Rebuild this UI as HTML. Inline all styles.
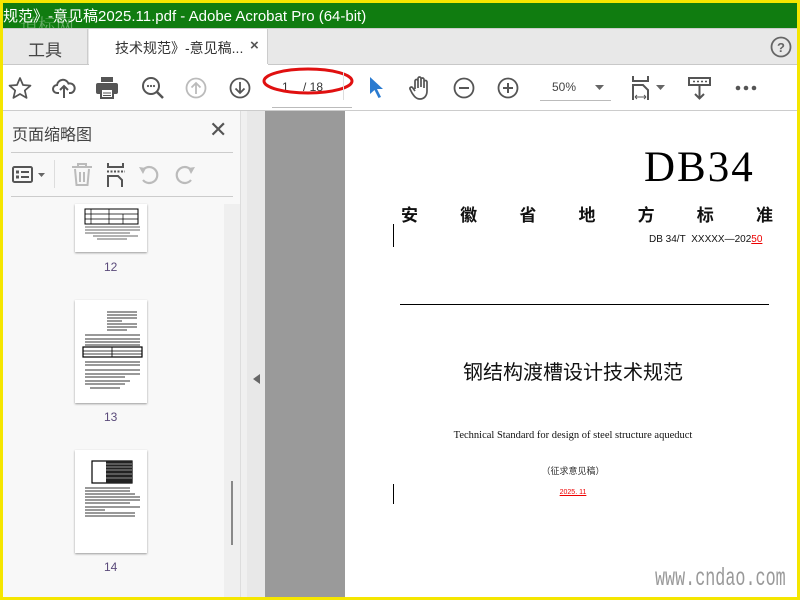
<!DOCTYPE html>
<html><head><meta charset="utf-8"><style>
*{margin:0;padding:0;box-sizing:border-box}
body{width:800px;height:600px;overflow:hidden;background:#f5e600;position:relative;font-family:"Liberation Sans","Noto Sans CJK SC",sans-serif}
.a{position:absolute}
svg{position:absolute;overflow:visible}
</style></head><body>
<div class="a" style="left:3px;top:3px;width:794px;height:25px;background:#107c10"></div>
<div class="a" style="left:3px;top:5px;color:#fff;font-size:15px;white-space:nowrap">规范》-意见稿2025.11.pdf - Adobe Acrobat Pro (64-bit)</div>
<div class="a" style="left:20px;top:12px;color:rgba(255,255,255,.35);font-size:18px;font-family:'Noto Serif CJK SC',serif">道标网</div>
<div class="a" style="left:3px;top:28px;width:794px;height:37px;background:#e8e8e8;border-top:1px solid #ccc;border-bottom:1px solid #c8c8c8"></div>
<div class="a" style="left:3px;top:29px;width:85px;height:35px;border-right:1px solid #ccc"></div>
<div class="a" style="left:28px;top:36px;font-size:17px;color:#444">工具</div>
<div class="a" style="left:89px;top:29px;width:179px;height:36px;background:#fff;border-right:1px solid #ccc"></div>
<div class="a" style="left:115px;top:38px;font-size:14px;color:#333">技术规范》-意见稿...</div>
<div class="a" style="left:250px;top:37px;font-size:15px;color:#555;font-weight:bold">×</div>
<svg style="left:770px;top:36px" width="22" height="22"><circle cx="11" cy="11" r="9.5" fill="none" stroke="#666" stroke-width="1.8"/><text x="11" y="16" text-anchor="middle" font-size="13" font-weight="bold" fill="#666" font-family="Liberation Sans">?</text></svg>
<div class="a" style="left:3px;top:65px;width:794px;height:46px;background:#fff;border-bottom:1px solid #ccc"></div>
<div class="a" style="left:89px;top:64px;width:179px;height:2px;background:#fff"></div>
<!-- toolbar icons -->
<svg style="left:8px;top:76px" width="24" height="24"><path d="M12 2l3 7 7.5.6-5.7 4.9 1.8 7.4L12 18l-6.6 3.9 1.8-7.4L1.5 9.6 9 9z" fill="none" stroke="#555" stroke-width="1.7" stroke-linejoin="round"/></svg>
<svg style="left:52px;top:76px" width="24" height="24"><path d="M7 17H5a4 4 0 0 1 0-8 6 6 0 0 1 11.5-1.5A4.5 4.5 0 0 1 19 17h-2" fill="none" stroke="#555" stroke-width="2"/><path d="M12 22V11M8 14l4-4 4 4" fill="none" stroke="#555" stroke-width="2"/></svg>
<svg style="left:95px;top:76px" width="24" height="24"><rect x="6" y="1" width="12" height="5" fill="#555"/><rect x="1" y="7" width="22" height="11" rx="2" fill="#555"/><rect x="6" y="13" width="12" height="9" fill="#fff" stroke="#555" stroke-width="2"/><path d="M8 17h8M8 19.5h8" stroke="#555"/></svg>
<svg style="left:141px;top:76px" width="24" height="24"><circle cx="10" cy="10" r="8" fill="none" stroke="#555" stroke-width="2"/><path d="M16 16l6 6" stroke="#555" stroke-width="2.5"/><circle cx="7" cy="10" r="1.1" fill="#555"/><circle cx="10" cy="10" r="1.1" fill="#555"/><circle cx="13" cy="10" r="1.1" fill="#555"/></svg>
<svg style="left:185px;top:77px" width="22" height="22"><circle cx="11" cy="11" r="9.5" fill="none" stroke="#bbb" stroke-width="1.8"/><path d="M11 17V6M6.5 10.5L11 6l4.5 4.5" fill="none" stroke="#bbb" stroke-width="1.8"/></svg>
<svg style="left:229px;top:77px" width="22" height="22"><circle cx="11" cy="11" r="9.5" fill="none" stroke="#555" stroke-width="1.8"/><path d="M11 5v11M6.5 11.5L11 16l4.5-4.5" fill="none" stroke="#555" stroke-width="1.8"/></svg>
<div class="a" style="left:272px;top:107px;width:80px;height:1px;background:#bbb"></div>
<div class="a" style="left:282px;top:80px;font-size:12px;color:#333">1</div>
<div class="a" style="left:303px;top:80px;font-size:12px;color:#333">/ 18</div>
<svg style="left:262px;top:66px" width="96" height="32"><ellipse cx="46" cy="15" rx="44" ry="12" fill="none" stroke="#e01010" stroke-width="3"/></svg>
<div class="a" style="left:343px;top:72px;width:1px;height:28px;background:#ddd"></div>
<svg style="left:368px;top:76px" width="18" height="24"><path d="M2 1l13 12h-6l4 8-2.5 1-4-8-4.5 4z" fill="#2b7bd0"/></svg>
<svg style="left:408px;top:75px" width="24" height="26"><path d="M7 14V6a1.5 1.5 0 0 1 3 0v7M10 12V3.5a1.5 1.5 0 0 1 3 0V12M13 12V4.5a1.5 1.5 0 0 1 3 0V13M16 13V7a1.5 1.5 0 0 1 3 0v9c0 5-3 8-7 8s-6-3-8-6l-2-4a1.5 1.5 0 0 1 2.5-1.5L7 16" fill="none" stroke="#555" stroke-width="1.7"/></svg>
<svg style="left:453px;top:77px" width="22" height="22"><circle cx="11" cy="11" r="9.5" fill="none" stroke="#555" stroke-width="1.8"/><path d="M6 11h10" stroke="#555" stroke-width="2"/></svg>
<svg style="left:497px;top:77px" width="22" height="22"><circle cx="11" cy="11" r="9.5" fill="none" stroke="#555" stroke-width="1.8"/><path d="M6 11h10M11 6v10" stroke="#555" stroke-width="2"/></svg>
<div class="a" style="left:552px;top:80px;font-size:12px;color:#444">50%</div>
<svg style="left:595px;top:85px" width="10" height="6"><path d="M0 0h9L4.5 5z" fill="#666"/></svg>
<div class="a" style="left:540px;top:100px;width:71px;height:1px;background:#bbb"></div>
<svg style="left:632px;top:76px" width="36" height="26"><path d="M1 0v5h15V0" fill="none" stroke="#555" stroke-width="2"/><path d="M1 24V9h10l5 5v10" fill="none" stroke="#555" stroke-width="2"/><path d="M3 21h11M3 21l2-2M3 21l2 2M14 21l-2-2M14 21l-2 2" stroke="#555"/><path d="M24 9h9l-4.5 5z" fill="#666"/></svg>
<svg style="left:688px;top:77px" width="24" height="24"><rect x="1" y="1" width="21" height="7" fill="none" stroke="#555" stroke-width="2"/><path d="M5 4.5h2M9 4.5h2M13 4.5h2M17 4.5h2" stroke="#555" stroke-width="1.5"/><path d="M11.5 9v13M7 17l4.5 4.5L16 17" fill="none" stroke="#555" stroke-width="2"/></svg>
<svg style="left:735px;top:85px" width="22" height="6"><circle cx="3" cy="3" r="2.3" fill="#555"/><circle cx="11" cy="3" r="2.3" fill="#555"/><circle cx="19" cy="3" r="2.3" fill="#555"/></svg>
<!-- sidebar -->
<div class="a" style="left:3px;top:111px;width:221px;height:486px;background:#f8f8f8"></div>
<div class="a" style="left:224px;top:204px;width:16px;height:393px;background:#efefef"></div>
<div class="a" style="left:224px;top:111px;width:16px;height:93px;background:#f8f8f8"></div>
<div class="a" style="left:231px;top:481px;width:2px;height:64px;background:#888"></div>
<div class="a" style="left:12px;top:121px;font-size:16px;color:#444">页面缩略图</div>
<div class="a" style="left:209px;top:117px;font-size:22px;color:#555">✕</div>
<div class="a" style="left:11px;top:152px;width:222px;height:1px;background:#ccc"></div>
<div class="a" style="left:11px;top:196px;width:222px;height:1px;background:#ccc"></div>
<svg style="left:12px;top:165px" width="36" height="20"><rect x="1" y="2" width="19" height="15" rx="1.5" fill="none" stroke="#555" stroke-width="2"/><rect x="4" y="5.5" width="3" height="3" fill="#555"/><rect x="4" y="10.5" width="3" height="3" fill="#555"/><path d="M9 7h8M9 12h8" stroke="#555" stroke-width="2"/><path d="M26 8h7l-3.5 4z" fill="#666"/></svg>
<div class="a" style="left:54px;top:160px;width:1px;height:28px;background:#ddd"></div>
<svg style="left:71px;top:163px" width="22" height="24"><path d="M1 4h20M7 4V1h8v3M4 6l1.5 16h11L18 6M9 9v10M13 9v10" fill="none" stroke="#bbb" stroke-width="2"/></svg>
<svg style="left:106px;top:163px" width="20" height="24"><path d="M2 0v4h15V0M2 24V13h10l4 4v7" fill="none" stroke="#555" stroke-width="2"/><path d="M1 8.5h18" stroke="#555" stroke-width="2" stroke-dasharray="2 1.5"/></svg>
<svg style="left:138px;top:164px" width="24" height="22"><path d="M5 16A8 8 0 1 0 6 5" fill="none" stroke="#bbb" stroke-width="2.2"/><path d="M1 3l7 1-3 6z" fill="#bbb"/></svg>
<svg style="left:172px;top:164px" width="24" height="22"><path d="M19 16A8 8 0 1 1 18 5" fill="none" stroke="#bbb" stroke-width="2.2"/><path d="M23 3l-7 1 3 6z" fill="#bbb"/></svg>
<!-- thumbnails -->
<div class="a" style="left:75px;top:204px;width:72px;height:48px;background:#fff;box-shadow:0 1px 2px #999"></div>
<svg style="left:75px;top:204px" width="72" height="48"><rect x="10" y="5" width="53" height="15" fill="none" stroke="#000" stroke-width="1"/><path d="M10 10h53M10 15h53M34 5v15M48 10v10M16 5v15" stroke="#000" stroke-width=".7"/><path d="M10 23h55M10 26h55M10 29h45M18 32h45M22 35h30" stroke="#333" stroke-width=".8"/></svg>
<div class="a" style="left:104px;top:260px;font-size:12px;color:#5a4a7a">12</div>
<div class="a" style="left:75px;top:300px;width:72px;height:103px;background:#fff;box-shadow:0 1px 2px #999"></div>
<svg style="left:75px;top:300px" width="72" height="103"><path d="M32 12h30M32 15h30M32 18h30M32 21h15M32 24h30M32 27h30M32 30h20M10 35h55M10 39h55M10 42h55M10 45h55" stroke="#333" stroke-width=".9"/><rect x="8" y="47" width="59" height="10" fill="none" stroke="#000" stroke-width="1.2"/><path d="M8 51h59M8 54h59M37 47v10" stroke="#000" stroke-width=".8"/><path d="M10 62h55M10 65h55M10 70h55M10 74h55M10 77h40M10 81h45M10 84h40M15 88h30" stroke="#333" stroke-width=".9"/></svg>
<div class="a" style="left:104px;top:410px;font-size:12px;color:#5a4a7a">13</div>
<div class="a" style="left:75px;top:450px;width:72px;height:103px;background:#fff;box-shadow:0 1px 2px #999"></div>
<svg style="left:75px;top:450px" width="72" height="103"><rect x="17" y="11" width="40" height="22" fill="#fff" stroke="#000" stroke-width="1.2"/><rect x="31" y="11" width="26" height="22" fill="#222"/><path d="M31 14h26M31 17h26M31 20h26M31 24h26M31 28h26" stroke="#fff" stroke-width=".6"/><path d="M10 38h45M10 41h45M10 44h50M10 47h55M10 50h55M10 53h45M10 57h55M10 60h20M10 63h50M10 66h50" stroke="#333" stroke-width=".9"/></svg>
<div class="a" style="left:104px;top:560px;font-size:12px;color:#5a4a7a">14</div>
<!-- divider -->
<div class="a" style="left:240px;top:111px;width:7px;height:486px;background:#f0f0f0;border-left:1px solid #ddd"></div>
<div class="a" style="left:247px;top:111px;width:18px;height:486px;background:#e8e8e8"></div>
<svg style="left:253px;top:374px" width="8" height="10"><path d="M7 0v10L0 5z" fill="#666"/></svg>
<div class="a" style="left:265px;top:111px;width:80px;height:486px;background:#9a9a9a"></div>
<div class="a" style="left:345px;top:111px;width:452px;height:486px;background:#fff"></div>
<!-- page -->
<div class="a" style="left:644px;top:143px;font-family:'Liberation Serif',serif;font-size:43px;color:#000;letter-spacing:2px">DB34</div>
<div class="a" style="left:401px;top:201px;width:372px;font-size:17px;font-weight:bold;color:#111;display:flex;justify-content:space-between;font-family:'Noto Sans CJK SC',sans-serif"><span>安</span><span>徽</span><span>省</span><span>地</span><span>方</span><span>标</span><span>准</span></div>
<div class="a" style="left:393px;top:224px;width:1px;height:23px;background:#000"></div>
<div class="a" style="left:649px;top:234px;font-size:10px;color:#111;white-space:nowrap">DB 34/T&nbsp; XXXXX—202<span style="color:#e00;text-decoration:underline">50</span></div>
<div class="a" style="left:400px;top:304px;width:369px;height:1px;background:#000"></div>
<div class="a" style="left:373px;top:356px;width:400px;text-align:center;font-size:20px;color:#111;font-family:'Noto Sans CJK SC',sans-serif">钢结构渡槽设计技术规范</div>
<div class="a" style="left:373px;top:430px;width:400px;text-align:center;font-size:10.5px;color:#111;font-family:'Liberation Serif',serif">Technical Standard for design of steel structure aqueduct</div>
<div class="a" style="left:373px;top:464px;width:400px;text-align:center;font-size:9px;color:#333">（征求意见稿）</div>
<div class="a" style="left:393px;top:484px;width:1px;height:20px;background:#000"></div>
<div class="a" style="left:373px;top:489px;width:400px;text-align:center;font-size:7px;color:#e00;text-decoration:underline">2025. 11</div>
<div class="a" style="left:655px;top:564px;font-family:'Liberation Mono',monospace;font-size:25px;color:#999;transform:scaleX(.67);transform-origin:left;white-space:nowrap">www.cndao.com</div>
</body></html>
